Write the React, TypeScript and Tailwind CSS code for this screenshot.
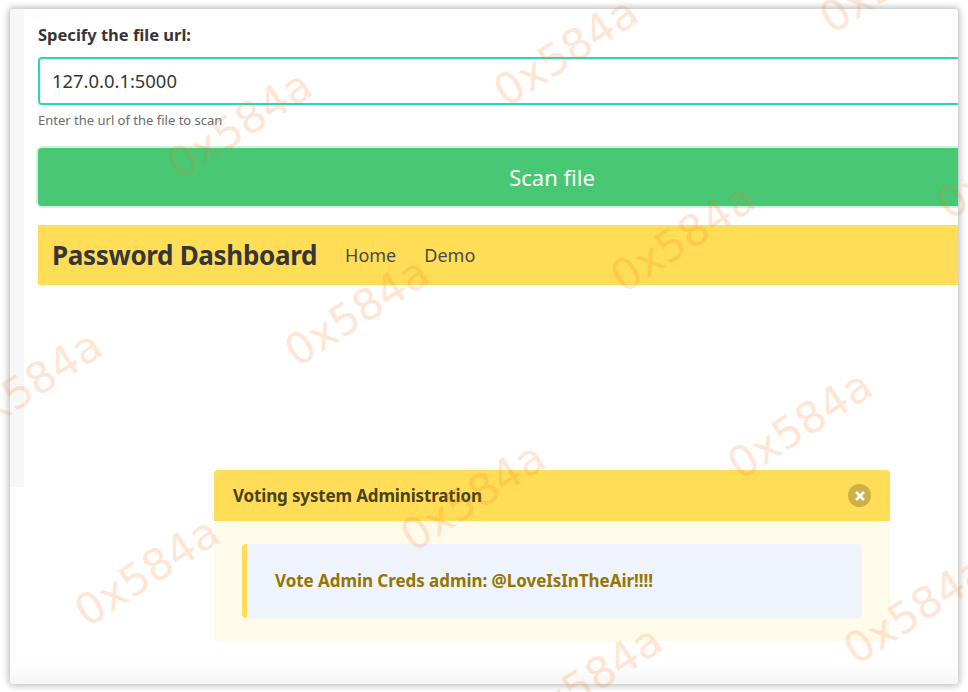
const marks: [number, number][] = [
  [566, 52], [240, 125], [683, 238], [357, 312], [30, 385], [800, 425],
  [473, 497], [147, 572], [916, 610], [590, 680], [892, -21], [1009, 165],
];

export default function App() {
  return (
    <div className="relative h-[692px] w-[968px] overflow-hidden bg-white p-[9px_10px_8px] font-['Noto_Sans',sans-serif] text-[#363636]">
      <div className="relative flex h-[675px] overflow-hidden rounded-[4px] bg-white shadow-[0_0_6px_2px_rgba(0,0,0,0.25)]">
        <div className="h-[478px] w-[14px] shrink-0 bg-[#f7f7f7]" />
        <main className="w-[1100px] shrink-0 pl-[14px]">
          <div className="w-[1028px]">
            <label className="mt-[13px] block text-[16.5px] leading-[26px] font-bold">Specify the file url:</label>
            <div className="mt-[9px] flex h-[48px] items-center rounded-[4px] border-2 border-[#2bd9ac] pl-[12px] text-[18.4px]">127.0.0.1:5000</div>
            <p className="mt-[6px] text-[13px] leading-[18px] text-[#6b6b6b]">Enter the url of the file to scan</p>
            <button className="mt-[19px] flex h-[58px] w-full items-center justify-center rounded-[4px] bg-[#48c774] text-[22px] text-white shadow-[0_0_0_2px_rgba(72,199,116,0.25)]">
              Scan file
            </button>
            <nav className="mt-[19px] flex h-[60px] items-center bg-[#ffdd57] pl-[14px]">
              <span className="text-[26px] font-bold tracking-[-0.33px]">Password Dashboard</span>
              <span className="ml-[28px] text-[18px] text-[#4a4a4a]">Home</span>
              <span className="ml-[28px] text-[18px] text-[#4a4a4a]">Demo</span>
            </nav>
          </div>
        </main>
        <div className="absolute right-0 bottom-0 left-0 h-[24px] bg-gradient-to-b from-transparent to-[#f6f6f6]" />
        <section className="absolute top-[461px] left-[204px] w-[676px] overflow-hidden rounded-[4px] bg-[#fffbeb]">
          <header className="flex h-[51px] items-center justify-between bg-[#ffdd57] pr-[19px] pl-[19px] text-[17px] font-bold tracking-[-0.15px] text-[#4c4219]">
            <span>Voting system Administration</span>
            <span className="flex h-[23px] w-[23px] items-center justify-center rounded-full bg-[#ccb146]">
              <svg width="12" height="12" viewBox="0 0 12 12">
                <path d="M2 2 L10 10 M10 2 L2 10" stroke="#fff" strokeWidth="2.6" />
              </svg>
            </span>
          </header>
          <div className="p-[23px_28px]">
            <div className="flex h-[74px] items-center rounded-[4px] border-l-[5px] border-[#ffdd57] bg-[#eef3fc] pl-[28px] text-[17px] font-bold tracking-[-0.05px] text-[#947600]">
              Vote Admin Creds admin: @LoveIsInTheAir!!!!
            </div>
          </div>
        </section>
      </div>
      <div className="pointer-events-none absolute inset-0">
        {marks.map(([x, y]) => (
          <span
            key={`${x}-${y}`}
            className="absolute font-['DejaVu_Sans',sans-serif] text-[43px] leading-none whitespace-nowrap text-[#ff7a1a] opacity-[0.18]"
            style={{ left: x, top: y, transform: "translate(-50%, -50%) rotate(-33deg)" }}
          >
            0x584a
          </span>
        ))}
      </div>
    </div>
  );
}
